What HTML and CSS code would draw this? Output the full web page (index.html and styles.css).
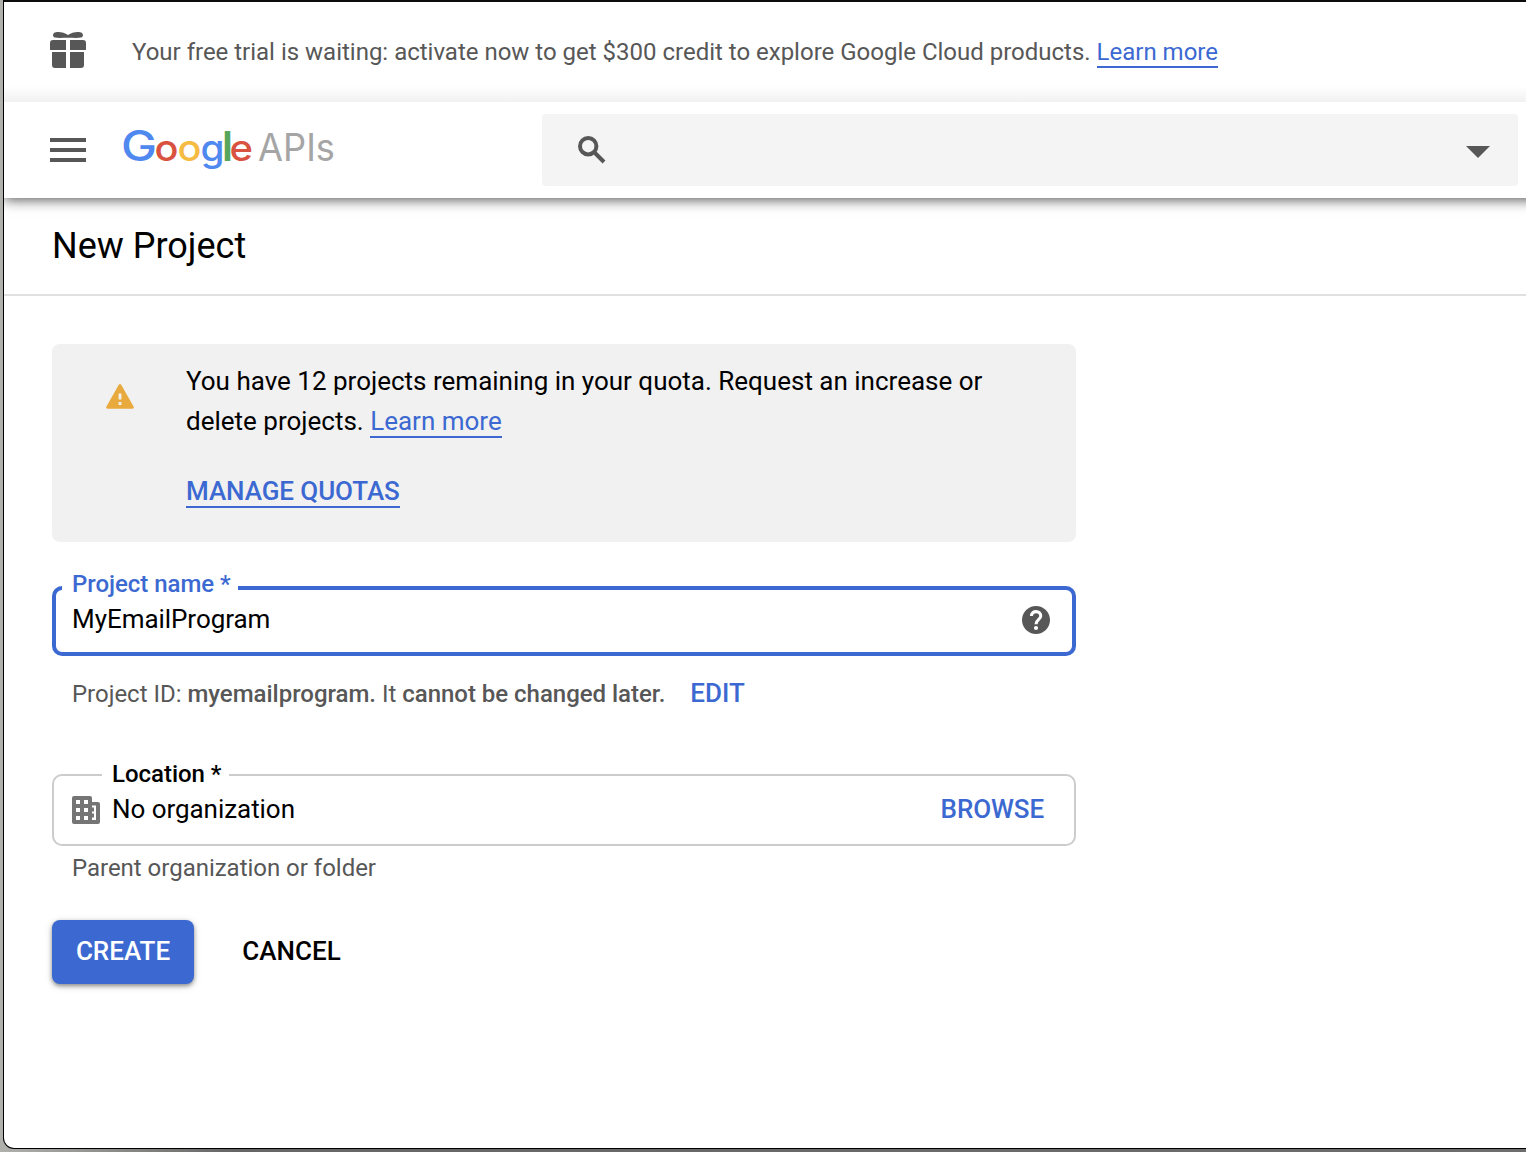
FILE: index.html
```html
<!DOCTYPE html>
<html lang="en">
<head>
<meta charset="utf-8">
<title>New Project</title>
<link rel="stylesheet" href="styles.css">
</head>
<body>
<div class="window">
  <div class="promo">
    <svg class="gift" width="36" height="37" viewBox="0 0 36 37" fill="#575757"><path d="M6 .2c5-.5 8.500.8 12 2.800C21.500 1 25-.3 30 .2c3.500.4 4 4.600 1 5.400-4 .8-8 .2-13 .2s-9 .6-13-.2C2 4.800 2.500.6 6 .2ZM3 8h13v10H0v-7a3 3 0 0 1 3-3ZM20 8h13a3 3 0 0 1 3 3v7H20ZM2 20h14v16H5a3 3 0 0 1-3-3ZM20 20h14v13a3 3 0 0 1-3 3H20Z"/></svg>
    <p class="promo-text">Your free trial is waiting: activate now to get $300 credit to explore Google Cloud products. <a class="link">Learn more</a></p>
  </div>
  <header class="topbar">
    <svg class="menu" width="36" height="24" fill="#575757"><path d="M0 0h36v4H0ZM0 10h36v4H0ZM0 20h36v4H0Z"/></svg>
    <svg class="logo" width="220" height="60" viewBox="0 0 220 60">
      <text class="logo-google" y="41"><tspan class="cap" x="0" textLength="36" lengthAdjust="spacingAndGlyphs" fill="#4f88ef">G</tspan><tspan x="33.500" textLength="24" lengthAdjust="spacingAndGlyphs" fill="#d9523f">o</tspan><tspan x="56.500" textLength="24" lengthAdjust="spacingAndGlyphs" fill="#f5bb42">o</tspan><tspan x="79.500" textLength="24" lengthAdjust="spacingAndGlyphs" fill="#4f88ef">g</tspan><tspan class="stem" x="102" textLength="9" lengthAdjust="spacingAndGlyphs" fill="#58a65c">l</tspan><tspan x="108.500" textLength="23.500" lengthAdjust="spacingAndGlyphs" fill="#d9523f">e</tspan></text>
      <text class="logo-apis" x="137" y="41" textLength="77" lengthAdjust="spacingAndGlyphs">APIs</text>
    </svg>
    <div class="search">
      <svg width="28" height="28" viewBox="0 0 28 28"><circle cx="10.200" cy="10.200" r="8.200" fill="none" stroke="#575757" stroke-width="4"/><path d="M16 16 26 26" stroke="#575757" stroke-width="4"/></svg>
      <svg class="arrow" width="24" height="12"><path d="M0 0h24L12 12Z" fill="#575757"/></svg>
    </div>
  </header>
  <h1 class="title">New Project</h1>
  <main class="content">
    <section class="quota">
      <svg width="28" height="25" viewBox="0 0 28 25"><path d="M12.800.8q1.200-1.600 2.400 0L27.700 22.800q.7 1.700-1.200 1.900h-25Q-.4 24.500.3 22.800Z" fill="#e8a93d"/><path d="M12.600 9.500h2.800v6h-2.800ZM12.600 18h2.800v3h-2.800Z" fill="#f1f1f1"/></svg>
      <div>
        <p class="quota-text">You have 12 projects remaining in your quota. Request an increase or<br>delete projects. <a class="link">Learn more</a></p>
        <a class="link manage">MANAGE QUOTAS</a>
      </div>
    </section>
    <div class="field name-field">
      <label class="label">Project name *</label>
      <span class="value">MyEmailProgram</span>
      <svg class="help" width="28" height="28" viewBox="2 2 20 20"><path fill="#575757" d="M12 2C6.480 2 2 6.480 2 12s4.480 10 10 10 10-4.480 10-10S17.520 2 12 2z"/><path d="M8.700 9.200C8.700 4.900 15.400 5 15.400 9.200 15.400 11.500 12 11.800 12 15.100" fill="none" stroke="#fff" stroke-width="2.200"/><circle cx="12" cy="17.700" r="1.500" fill="#fff"/></svg>
    </div>
    <p class="hint id-hint"><span>Project ID: <b>myemailprogram.</b> It <b>cannot be changed later.</b></span><a class="action">EDIT</a></p>
    <div class="field location-field">
      <label class="label">Location *</label>
      <svg class="org" width="28" height="28" viewBox="0 0 28 28"><path fill="#757575" fill-rule="evenodd" d="M2 0h16q2 0 2 2v4h6q2 0 2 2v18q0 2-2 2H2q-2 0-2-2V2Q0 0 2 0ZM4 4v4h4V4ZM12 4v4h4V4ZM4 12v4h4v-4ZM12 12v4h4v-4ZM4 20v4h4v-4ZM12 20v4h4v-4ZM20 9.500v2h2v4h-2v2h2v4h-2v2.500h4v-14.500Z"/></svg>
      <span class="value">No organization</span>
      <a class="action browse">BROWSE</a>
    </div>
    <p class="hint parent-hint">Parent organization or folder</p>
    <div class="buttons">
      <button class="btn create">CREATE</button>
      <button class="btn cancel">CANCEL</button>
    </div>
  </main>
</div>
</body>
</html>
```
FILE: styles.css
```css
* { box-sizing: border-box; }
body {
  margin: 0;
  height: 1152px;
  padding-left: 3px;
  overflow: hidden;
  background: linear-gradient(90deg, #b0b0ac 0, #666 230px, #6d6d6d 100%);
  font-family: Roboto, sans-serif;
  color: #000;
}
p, h1 { margin: 0; font-weight: 400; }
svg { display: block; flex: none; }
.window {
  height: 1149px;
  border: 1px solid #000;
  border-top: 2px solid #0c0c0c;
  border-right: 0;
  border-bottom-left-radius: 11px;
  background: #fff;
  overflow: hidden;
}
.link {
  color: #3c69d1;
  border-bottom: 2px solid #3c69d1;
}
.promo {
  height: 100px;
  padding: 0 0 0 46px;
  display: flex;
  align-items: center;
  gap: 46px;
  background: linear-gradient(#fff 84px, #f1f1f1 100px);
}
.gift { margin-bottom: 3px; }
.promo-text {
  font-size: 24px;
  line-height: 28px;
  letter-spacing: -.005px;
  color: #575757;
  white-space: nowrap;
}
.topbar {
  position: relative;
  height: 96px;
  margin-right: -20px;
  padding: 12px 28px 12px 46px;
  display: flex;
  align-items: center;
  background: #fff;
  box-shadow: 0 2px 12px rgba(0, 0, 0, .65);
  clip-path: inset(0 0 -20px 0);
}
.logo { margin-left: 35px; }
.logo-google { font-family: Inter, sans-serif; font-weight: 500; font-size: 37px; }
.logo-google .cap { font-size: 42px; }
.logo-google .stem { font-size: 41px; font-weight: 800; }
.logo-apis { font-family: Inter, sans-serif; font-weight: 400; font-size: 38px; fill: #a5a5a5; }
.search {
  margin-left: auto;
  width: 976px;
  height: 72px;
  padding: 0 28px 0 36px;
  display: flex;
  align-items: center;
  justify-content: space-between;
  border-radius: 4px;
  background: #f4f4f4;
}
.arrow { margin-top: 4px; }
.title {
  height: 98px;
  padding-left: 48px;
  border-bottom: 2px solid #e0e0e0;
  font-size: 36px;
  line-height: 96px;
}
.content { width: 1072px; padding: 48px 0 0 48px; }
.quota {
  height: 198px;
  padding: 17px 0 0 54px;
  display: flex;
  gap: 52px;
  border-radius: 8px;
  background: #f1f1f1;
}
.quota svg { margin-top: 23px; }
.quota-text { font-size: 26px; line-height: 40px; white-space: nowrap; }
.manage { display: inline-block; margin-top: 35px; font-size: 26px; line-height: 30px; font-weight: 500; letter-spacing: -.07px; }
.field {
  position: relative;
  display: flex;
  align-items: center;
  border-radius: 10px;
  font-size: 26px;
}
.value { letter-spacing: -.05px; }
.name-field { height: 70px; margin-top: 44px; padding: 0 22px 2px 16px; border: 4px solid #3c69d1; }
.name-field .value { padding-bottom: 2px; }
.label {
  position: absolute;
  padding: 0 7px 0 10px;
  background: #fff;
  font-size: 24px;
  line-height: 28px;
  font-weight: 500;
  letter-spacing: -.03px;
  white-space: nowrap;
}
.name-field .label { left: 6px; top: -20px; color: #3c69d1; }
.location-field .label { padding-right: 8px; }
.help { margin-left: auto; }
.hint { padding-left: 20px; font-size: 24px; line-height: 28px; letter-spacing: -.02px; color: #575757; }
.hint b { font-weight: 500; }
.id-hint { display: flex; align-items: center; height: 28px; margin-top: 24px; gap: 25px; }
.action { color: #3c69d1; font-size: 26px; font-weight: 500; }
.id-hint .action { margin-bottom: 2px; }
.location-field { height: 72px; margin-top: 66px; padding: 0 30px 2px 18px; border: 2px solid #ccc; }
.location-field .label { left: 48px; top: -16px; }
.org { margin: 2px 12px 0 0; }
.browse { margin-left: auto; letter-spacing: -.1px; }
.parent-hint { margin-top: 8px; }
.buttons { display: flex; gap: 24px; margin-top: 38px; }
.btn {
  height: 64px;
  padding: 0 0 2px;
  border: 0;
  border-radius: 8px;
  background: none;
  font: 500 26px/62px Roboto, sans-serif;
}
.create {
  width: 142px;
  color: #fff;
  background: #3c69d1;
  box-shadow: 0 2px 4px rgba(0, 0, 0, .4), 0 2px 10px rgba(0, 0, 0, .12);
}
.cancel { width: 147px; color: #000; }
```
